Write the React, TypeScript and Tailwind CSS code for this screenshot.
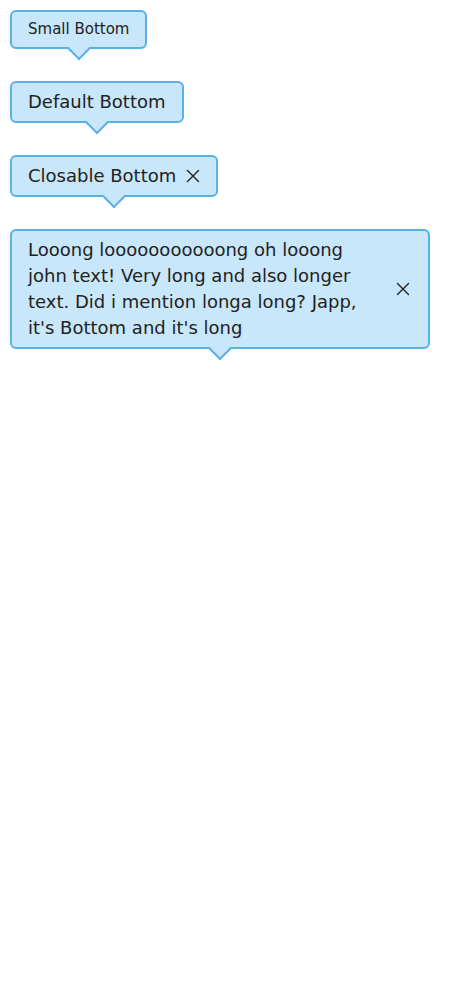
import React, { FC, ReactNode } from "react";

type TipProps = {
  children: ReactNode;
  small?: boolean;
  closable?: boolean;
  wide?: boolean;
};

const CloseIcon: FC = () => (
  <svg width="14" height="14" viewBox="0 0 14 14" className="shrink-0 text-[#222]">
    <path d="M1.5 1.5 L12.5 12.5 M12.5 1.5 L1.5 12.5" stroke="currentColor" strokeWidth="1.4" strokeLinecap="round" />
  </svg>
);

const Tooltip: FC<TipProps> = ({ children, small, closable, wide }) => (
  <div
    className={`relative flex items-center justify-between gap-[10px] self-start rounded-md border-2 border-[#5aafe5] bg-[#c8e7fa] text-[#222] ${
      small ? "px-4 py-[7px] text-[15px] leading-[21px]" : "px-4 py-[6px] text-[18px] leading-[26px]"
    } ${wide ? "w-[420px] pr-[18px]" : ""}`}
  >
    <span className={wide ? "max-w-[355px]" : ""}>{children}</span>
    {closable && <CloseIcon />}
    <div className="absolute -bottom-[10px] left-1/2 h-4 w-4 -translate-x-1/2 rotate-45 border-r-2 border-b-2 border-[#5aafe5] bg-[#c8e7fa]" />
  </div>
);

export default function App() {
  return (
    <div className="flex min-h-screen flex-col gap-8 bg-white p-[10px]" style={{ fontFamily: '"DejaVu Sans", sans-serif' }}>
      <Tooltip small>Small Bottom</Tooltip>
      <Tooltip>Default Bottom</Tooltip>
      <Tooltip closable>Closable Bottom</Tooltip>
      <Tooltip closable wide>
        Looong looooooooooong oh looong john text! Very long and also longer text. Did i mention longa long? Japp, it's
        Bottom and it's long
      </Tooltip>
    </div>
  );
}
